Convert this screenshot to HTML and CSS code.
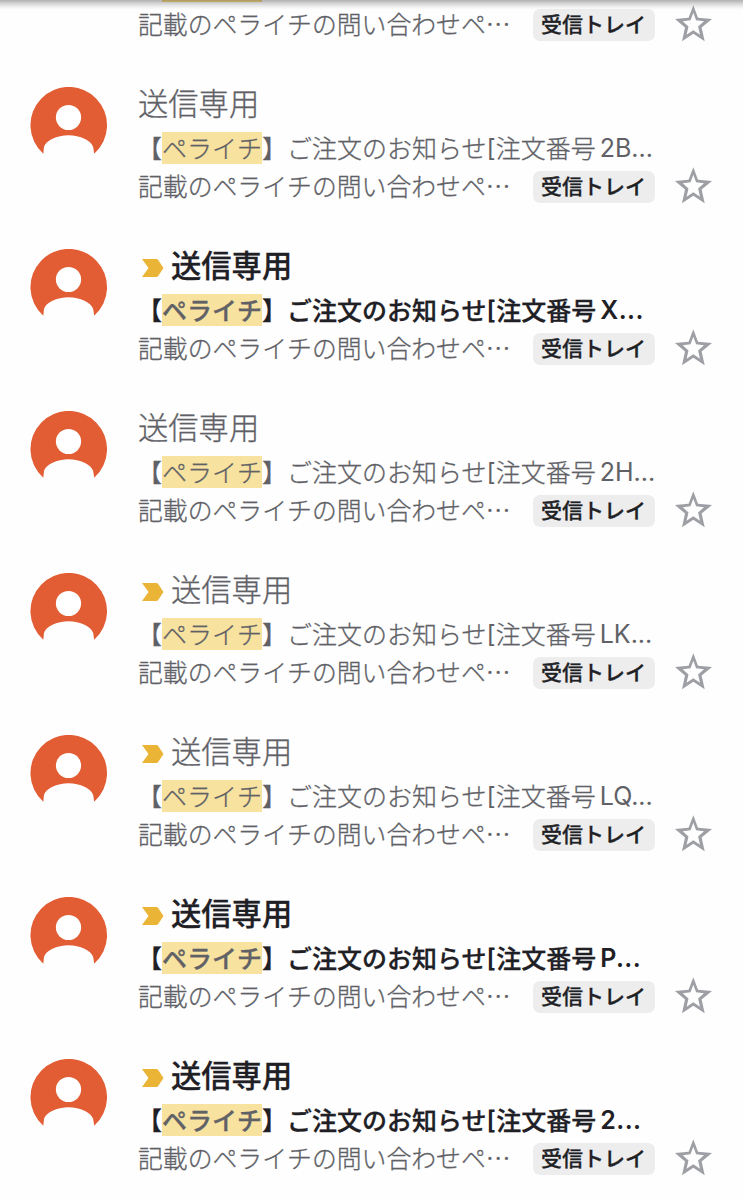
FILE: index.html
```
<!DOCTYPE html>
<html lang="ja">
<head>
<meta charset="utf-8">
<title>受信トレイ</title>
<link rel="stylesheet" href="styles.css">
</head>
<body>
<svg class="defs" width="0" height="0" aria-hidden="true">
  <symbol id="person" viewBox="0 0 78 78">
    <path fill="#e25d34" d="M13.300 66.800A38.300 38.300 0 1 1 64.200 66.800L63.200 60C61.500 53.500 50 48.200 38.500 48.200S15.500 53.500 14 60Z"/>
    <circle cx="38.500" cy="30.500" r="12.600" fill="#fff"/>
  </symbol>
  <symbol id="mark" viewBox="0 0 22 18">
    <path fill="#eab436" d="M0 0H14.500Q15.500 0 16.200 1L21.500 9L16.200 17Q15.500 18 14.500 18H0L6.500 9Z"/>
  </symbol>
  <symbol id="star" viewBox="0 0 39 39">
    <path fill="#9d9fa4" fill-rule="evenodd" d="M19.300 1.300L24 13.800L38 15L27.600 23.600L30.700 37.300L19.300 29.800L8 37.300L11 23.600L1 15L14.600 13.800ZM19.300 8.700L16.500 16.200L8.700 17.200L14.500 22.400L12.600 30.700L19.300 26.200L26 30.700L24.100 22.400L30 17.200L22.100 16.200Z"/>
  </symbol>
</svg>
<main class="list">
  <article class="mail partial"><div class="body"><div class="peek"></div><div class="bottom"><p class="snippet">記載のペライチの問い合わせペ…</p><span class="label">受信トレイ</span><svg class="star"><use href="#star"/></svg></div></div></article>
  <article class="mail"><svg class="avatar"><use href="#person"/></svg><div class="body"><h2 class="name">送信専用</h2><p class="subject">【<mark>ペライチ</mark>】<span>ご注文のお知らせ</span><span class="code">[</span>注文番号<span class="code id">2B...</span></p><div class="bottom"><p class="snippet">記載のペライチの問い合わせペ…</p><span class="label">受信トレイ</span><svg class="star"><use href="#star"/></svg></div></div></article>
  <article class="mail unread"><svg class="avatar"><use href="#person"/></svg><div class="body"><h2 class="name"><svg class="important"><use href="#mark"/></svg>送信専用</h2><p class="subject">【<mark>ペライチ</mark>】<span>ご注文のお知らせ</span><span class="code">[</span>注文番号<span class="code id">X...</span></p><div class="bottom"><p class="snippet">記載のペライチの問い合わせペ…</p><span class="label">受信トレイ</span><svg class="star"><use href="#star"/></svg></div></div></article>
  <article class="mail"><svg class="avatar"><use href="#person"/></svg><div class="body"><h2 class="name">送信専用</h2><p class="subject">【<mark>ペライチ</mark>】<span>ご注文のお知らせ</span><span class="code">[</span>注文番号<span class="code id">2H...</span></p><div class="bottom"><p class="snippet">記載のペライチの問い合わせペ…</p><span class="label">受信トレイ</span><svg class="star"><use href="#star"/></svg></div></div></article>
  <article class="mail"><svg class="avatar"><use href="#person"/></svg><div class="body"><h2 class="name"><svg class="important"><use href="#mark"/></svg>送信専用</h2><p class="subject">【<mark>ペライチ</mark>】<span>ご注文のお知らせ</span><span class="code">[</span>注文番号<span class="code id">LK...</span></p><div class="bottom"><p class="snippet">記載のペライチの問い合わせペ…</p><span class="label">受信トレイ</span><svg class="star"><use href="#star"/></svg></div></div></article>
  <article class="mail"><svg class="avatar"><use href="#person"/></svg><div class="body"><h2 class="name"><svg class="important"><use href="#mark"/></svg>送信専用</h2><p class="subject">【<mark>ペライチ</mark>】<span>ご注文のお知らせ</span><span class="code">[</span>注文番号<span class="code id">LQ...</span></p><div class="bottom"><p class="snippet">記載のペライチの問い合わせペ…</p><span class="label">受信トレイ</span><svg class="star"><use href="#star"/></svg></div></div></article>
  <article class="mail unread"><svg class="avatar"><use href="#person"/></svg><div class="body"><h2 class="name"><svg class="important"><use href="#mark"/></svg>送信専用</h2><p class="subject">【<mark>ペライチ</mark>】<span>ご注文のお知らせ</span><span class="code">[</span>注文番号<span class="code id">P...</span></p><div class="bottom"><p class="snippet">記載のペライチの問い合わせペ…</p><span class="label">受信トレイ</span><svg class="star"><use href="#star"/></svg></div></div></article>
  <article class="mail unread"><svg class="avatar"><use href="#person"/></svg><div class="body"><h2 class="name"><svg class="important"><use href="#mark"/></svg>送信専用</h2><p class="subject">【<mark>ペライチ</mark>】<span>ご注文のお知らせ</span><span class="code">[</span>注文番号<span class="code id">2...</span></p><div class="bottom"><p class="snippet">記載のペライチの問い合わせペ…</p><span class="label">受信トレイ</span><svg class="star"><use href="#star"/></svg></div></div></article>
</main>
<div class="shade"></div>
</body>
</html>
```
FILE: styles.css
```
* { box-sizing: border-box; }
body {
  margin: 0;
  height: 1200px;
  overflow: hidden;
  background: #fefefe;
  color: #606166;
  font-family: "Noto Sans CJK JP", sans-serif;
  font-weight: 300;
}
.defs { position: absolute; }
.list { display: flex; flex-direction: column; }
.mail {
  flex: none;
  height: 162px;
  display: flex;
  padding: 8px 30px 0;
  -webkit-text-stroke: .3px currentColor;
}
.mail:last-child { height: 148px; }
.avatar { width: 78px; height: 78px; margin-top: 3px; flex: none; }
.body { margin-left: 30px; flex: 1; min-width: 0; }
.partial { height: 76px; padding-top: 0; }
.partial .body { margin-left: 108px; }
.peek {
  width: 100px;
  height: 2px;
  margin: 0 0 6px 24px;
  background: #f8dc89;
}
.name, .subject, .snippet { margin: 0; white-space: nowrap; font-weight: inherit; }
.name {
  height: 42px;
  display: flex;
  align-items: flex-start;
  font-size: 30.3px;
  line-height: 36px;
}
.important { width: 22px; height: 18px; margin: 13px 7px 0 4px; }
.subject {
  height: 44px;
  display: flex;
  align-items: flex-start;
  padding-top: 6px;
  margin-left: -1px;
  font-size: 25px;
  line-height: 30px;
}
mark { background: #f8e29f; color: #606166; height: 32px; }
.code {
  font-family: Inter, "Noto Sans CJK JP", sans-serif;
  font-weight: 400;
  line-height: 33px;
  -webkit-text-stroke: 0;
}
.id { margin-left: 4px; }
.bottom { height: 34px; display: flex; align-items: flex-start; }
.snippet { width: 395px; font-size: 24.85px; line-height: 30px; }
.label {
  width: 122px;
  height: 32px;
  margin-top: 1px;
  border-radius: 7px;
  background: #ededee;
  color: #202124;
  font-size: 21px;
  font-weight: 500;
  line-height: 29px;
  text-align: center;
  text-indent: -1px;
}
.star { width: 39px; height: 39px; margin: -4px 0 0 19px; flex: none; }
.unread .name, .unread .subject { color: #1f2025; font-weight: 500; }
.unread .code { font-weight: 600; letter-spacing: .4px; }
.shade {
  position: absolute;
  top: 0;
  left: 0;
  width: 100%;
  height: 10px;
  background: linear-gradient(rgba(0,0,0,.3), rgba(0,0,0,.18) 30%, rgba(0,0,0,.05) 70%, rgba(0,0,0,0));
}
```
